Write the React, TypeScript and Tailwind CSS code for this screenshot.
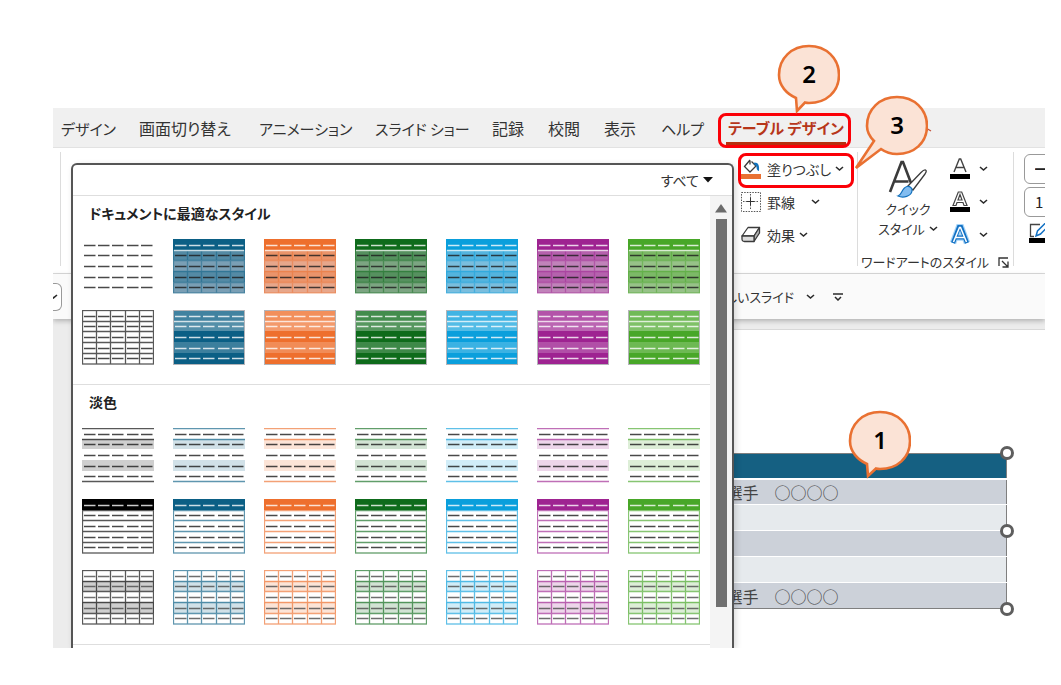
import { clsx } from 'clsx';
import type { ReactNode } from 'react';

type Variant = 'plain' | 'themed' | 'grid' | 'solid' | 'lines' | 'header' | 'banded';

const accents = [
    { name: '黒', color: '#000000' },
    { name: '青', color: '#0b5f85' },
    { name: 'オレンジ', color: '#ee6f2d' },
    { name: '濃い緑', color: '#0e6b1b' },
    { name: '水色', color: '#0a9fdc' },
    { name: '紫', color: '#9e2391' },
    { name: '緑', color: '#48a728' },
];

const sections: { title: string; rows: { first: Variant; rest: Variant }[] }[] = [
    {
        title: 'ドキュメントに最適なスタイル',
        rows: [
            { first: 'plain', rest: 'themed' },
            { first: 'grid', rest: 'solid' },
        ],
    },
    {
        title: '淡色',
        rows: [
            { first: 'lines', rest: 'lines' },
            { first: 'header', rest: 'header' },
            { first: 'banded', rest: 'banded' },
        ],
    },
];

const tabs = [
    { label: 'デザイン', width: 'w-[78px] text-[15px]' },
    { label: '画面切り替え', width: 'w-[120px]' },
    { label: 'アニメーション', width: 'w-[116px] text-[15px]' },
    { label: 'スライド ショー', width: 'w-[117px] text-[15px]' },
    { label: '記録', width: 'w-[56px]' },
    { label: '校閲', width: 'w-[56px]' },
    { label: '表示', width: 'w-[57px]' },
    { label: 'ヘルプ', width: 'w-[63px] text-[15px]' },
];

const tableRows = ['選手　○○○○', '', '', '', '選手　○○○○'];

const bands = [0, 11, 21, 32, 43, 54];
const dashRows = [6, 16, 27, 38, 48];
const dashCols = [2, 16, 30, 45, 59];
const columnLines = [14.5, 28.5, 43.5, 57.5];

function Band({ row, color, opacity = 1 }: { row: number; color: string; opacity?: number }) {
    return <rect x="0" y={bands[row]} width="72" height={bands[row + 1] - bands[row]} fill={color} opacity={opacity} />;
}

function StyleThumb({ variant, color }: { variant: Variant; color: string }) {
    const filledHeader = variant === 'themed' || variant === 'header';
    const hasColumns = variant === 'themed' || variant === 'grid' || variant === 'banded';
    const hasRows = hasColumns || variant === 'header';
    const lineOpacity = variant === 'themed' ? 0.45 : 0.65;

    return (
        <svg width="72" height="55" viewBox="0 0 72 55" aria-hidden="true">
            {variant === 'themed' && (
                <>
                    <rect width="72" height="54" fill="#e0dbe0" />
                    {[1, 2, 3, 4].map((row) => (
                        <Band key={row} row={row} color={color} opacity={row % 2 ? 0.66 : 0.48} />
                    ))}
                </>
            )}
            {variant === 'solid' && (
                <>
                    {[0.78, 0.7, 1, 0.8, 1].map((opacity, row) => (
                        <Band key={row} row={row} color={color} opacity={opacity} />
                    ))}
                    <rect x="0.5" y="0.5" width="71" height="54" fill="none" stroke="#b4b4b8" />
                </>
            )}
            {(variant === 'lines' || variant === 'banded') && (
                <>
                    <Band row={1} color={color} opacity={0.19} />
                    <Band row={3} color={color} opacity={0.19} />
                </>
            )}
            {hasRows && (
                <g stroke={color} strokeWidth="1.3" opacity={lineOpacity}>
                    <rect x="0.5" y="0.5" width="71" height="53.500" fill="none" />
                    {[11, 21, 32, 43].map((y) => (
                        <path key={y} d={`M0 ${y + 0.5}H72`} />
                    ))}
                    {hasColumns && columnLines.map((x) => <path key={x} d={`M${x} 0V54`} />)}
                </g>
            )}
            {variant === 'lines' && <path d="M0 .5H72M0 11.5H72M0 53.5H72" stroke={color} strokeWidth="1.3" opacity="0.65" />}
            {filledHeader && <Band row={0} color={color} />}
            {(variant === 'themed' || variant === 'solid') && <path d="M1 11.5H71" stroke="#fff" strokeWidth="1.400" opacity="0.75" />}
            {dashRows.map((y, row) => (
                <g
                    key={y}
                    stroke={variant === 'solid' || (filledHeader && row === 0) ? '#ffffff' : variant === 'banded' ? '#4a4a4a' : '#1c1c1c'}
                    strokeWidth="1.5"
                    opacity={0.8}
                >
                    {dashCols.map((x) => (
                        <path key={x} d={`M${x} ${y + 0.5}h11.500`} />
                    ))}
                </g>
            ))}
        </svg>
    );
}

function Chevron({ className }: { className?: string }) {
    return (
        <svg width="9" height="6" viewBox="0 0 9 6" fill="none" stroke="#2b2b2b" strokeWidth="1.6" className={clsx('shrink-0', className)}>
            <path d="M1 1l3.5 3L8 1" />
        </svg>
    );
}

function FillIcon() {
    return (
        <svg width="20" height="20" viewBox="0 0 20 20" fill="none">
            <path d="M9 1L3.500 7.500l5.500 5.500 6-6L10.500 2.500M9 1.500v4" stroke="#3b3b3b" strokeWidth="1.300" />
            <path d="M13.500 3.500c4 0 5 3 4.500 8.500-2-.5-2.500-2-2.500-4.500l-3-3z" fill="#1173bd" />
            <path d="M0 15h20v5H0z" fill="#e97132" />
        </svg>
    );
}

function BorderIcon() {
    return (
        <svg width="20" height="20" viewBox="0 0 20 20" fill="none" stroke="#555">
            <path d="M.5.5h19v19H.5z" strokeDasharray="1.500 1.200" />
            <path d="M9.500 2v16M2 9.500h16" strokeDasharray="1.500 1.200" />
            <path d="M6 9.500h7M9.500 6v7" stroke="#333" />
        </svg>
    );
}

function EffectIcon() {
    return (
        <svg width="20" height="18" viewBox="0 0 20 18" fill="none" stroke="#3b3b3b" strokeWidth="1.300" strokeLinejoin="round">
            <path d="M1 10l6-8.500h11.500L13 10z" fill="#fff" />
            <path d="M13 10l5.500-8.500V7L13 15.500z" fill="#b5b5b5" />
            <path d="M1 10h12v5.500H3.500Q1 15.500 1 13z" fill="#dcdcdc" />
        </svg>
    );
}

function QuickStyleIcon() {
    return (
        <svg width="40" height="40" viewBox="0 0 40 40" fill="none">
            <path d="M2 33L13.500 3h1.500l8 21M6.500 22.500h14" stroke="#3b3b3b" strokeWidth="2.600" />
            <path d="M20 27L33 13.500c4-4 7-3 4 1.500L25 31z" fill="#fff" stroke="#3b3b3b" strokeWidth="1.300" />
            <path d="M10 37c4-1 3.500-8 9-9.500 3-.5 5.500 1.500 5 4.500-.8 5-8.500 7.500-14 5z" fill="#83bdf0" stroke="#1371bd" strokeWidth="1.200" />
        </svg>
    );
}

function TextFillIcon() {
    return (
        <svg width="22" height="22" viewBox="0 0 22 22" fill="none">
            <path d="M5 14L10.300 1h1.400L17 14M7 9.500h8" stroke="#444" strokeWidth="1.400" />
            <path d="M1 16h20v5H1z" fill="#000" />
        </svg>
    );
}

function TextOutlineIcon() {
    return (
        <svg width="22" height="22" viewBox="0 0 22 22" fill="none">
            <path d="M4 14.500L9.300 1h3.400L18 14.500h-3l-1-3H8l-1 3zM9 9h4l-2-5.500z" stroke="#444" strokeWidth="1.200" />
            <path d="M1 16h20v5H1z" fill="#000" />
        </svg>
    );
}

function TextEffectIcon() {
    return (
        <svg width="22" height="22" viewBox="0 0 22 22" fill="none">
            <path d="M4 19L10 3h2l6 16M7 13.500h8" stroke="#a5d3f7" strokeWidth="6.500" />
            <path d="M4 19L10 3h2l6 16M7 13.500h8" stroke="#1271c4" strokeWidth="4.200" />
            <path d="M4.500 18L10.500 3.500h1l6 14.500M7 13.500h8" stroke="#fff" strokeWidth="1.500" />
        </svg>
    );
}

function PenOutlineIcon() {
    return (
        <svg width="22" height="20" viewBox="0 0 22 20" fill="none" className="shrink-0">
            <path d="M12 1.500H2.500v12H6" stroke="#444" strokeWidth="1.300" />
            <path d="M8 13l1.500-5L17 .5l3 3-7.500 7.500z" fill="#fff" stroke="#1271c4" strokeWidth="1.500" />
            <path d="M1 15h21v5H1z" fill="#000" />
        </svg>
    );
}

function RibbonButton({ icon, label, wide = false }: { icon: ReactNode; label: string; wide?: boolean }) {
    return (
        <button className="flex h-[33px] items-center text-left text-sm text-[#333]">
            <span className="w-[26px]">{icon}</span>
            {label}
            <Chevron className={wide ? 'ml-4' : 'ml-1'} />
        </button>
    );
}

function Callout({ label, className, path }: { label: string; className: string; path: string }) {
    return (
        <div className={clsx('absolute h-[76px] w-[76px]', className)}>
            <svg width="76" height="76" viewBox="0 0 76 76" className="absolute inset-0">
                <path d={path} fill="#fbe3d6" stroke="#e97132" strokeWidth="2.600" strokeLinejoin="miter" />
            </svg>
            <span className="absolute top-[2px] right-0 w-[62px] text-center font-['Noto_Sans'] text-2xl leading-[56px] font-semibold text-black">
                {label}
            </span>
        </div>
    );
}

function StyleGallery() {
    return (
        <div className="absolute top-[55px] bottom-0 left-[18px] flex w-[663px] flex-col overflow-hidden rounded-t-md border-2 border-b-0 border-[#555] bg-white shadow-[2px_2px_6px_rgba(0,0,0,0.15)]">
            <div className="flex h-[31px] shrink-0 items-center justify-end border-b border-[#dedede] pr-[19px]">
                <button className="flex items-center gap-1 text-sm text-[#333]">
                    すべて
                    <svg width="10" height="6" viewBox="0 0 10 6">
                        <path d="M0 0h10L5 5.500z" fill="#111" />
                    </svg>
                </button>
            </div>
            <div className="flex min-h-0 flex-1">
                <div className="flex-1 overflow-hidden">
                    {sections.map((section) => (
                        <section key={section.title} className="border-b border-[#dedede] pb-[19px]">
                            <h2 className="px-4 pt-[5px] text-sm leading-6 font-bold text-[#222]">{section.title}</h2>
                            <div className="grid gap-y-4 px-[9px] pt-[14px]">
                                {section.rows.map((row) => (
                                    <div key={row.rest} className="flex gap-[19px]">
                                        {accents.map((accent, i) => (
                                            <button key={accent.name} aria-label={`${section.title} ${accent.name}`} className="shrink-0">
                                                <StyleThumb variant={i === 0 ? row.first : row.rest} color={accent.color} />
                                            </button>
                                        ))}
                                    </div>
                                ))}
                            </div>
                        </section>
                    ))}
                </div>
                <div className="flex w-[22px] flex-col items-center bg-[#f4f4f4] pt-2 pb-[41px]">
                    <svg width="12" height="9" viewBox="0 0 12 9" className="shrink-0">
                        <path d="M6 0l6 8.500H0z" fill="#6b6b6b" />
                    </svg>
                    <div className="mt-[6px] w-[11px] flex-1 bg-[#707070]" />
                </div>
            </div>
        </div>
    );
}

function Ribbon() {
    return (
        <div className="flex h-[126px] border-b border-[#dcdcdc] bg-white pt-1 pb-[7px]">
            <div className="flex w-[688px] shrink-0 pl-[7px]">
                <div className="flex-1 border-l border-[#dcdcdc]" />
            </div>
            <div className="w-[117px] shrink-0 border-r border-[#dcdcdc]">
                <RibbonButton icon={<FillIcon />} label="塗りつぶし" />
                <RibbonButton icon={<BorderIcon />} label="罫線" wide />
                <RibbonButton icon={<EffectIcon />} label="効果" />
            </div>
            <div className="flex w-[156px] shrink-0 flex-col border-r border-[#dcdcdc]">
                <div className="flex pl-[18px]">
                    <button className="flex w-[64px] flex-col items-center pt-[7px] text-[13px] leading-5 text-[#333]">
                        <QuickStyleIcon />
                        <span>クイック</span>
                        <span className="flex items-center gap-1 whitespace-nowrap">
                            スタイル
                            <Chevron />
                        </span>
                    </button>
                    <div className="pl-[9px]">
                        {[
                            { label: '文字の塗りつぶし', icon: <TextFillIcon /> },
                            { label: '文字の輪郭', icon: <TextOutlineIcon /> },
                            { label: '文字の効果', icon: <TextEffectIcon /> },
                        ].map((item) => (
                            <button key={item.label} aria-label={item.label} className="flex h-[33px] items-center gap-2">
                                {item.icon}
                                <Chevron />
                            </button>
                        ))}
                    </div>
                </div>
                <div className="flex items-center justify-between pr-1 pl-[3px] text-[13px] leading-[22px] whitespace-nowrap text-[#333]">
                    ワードアートのスタイル
                    <button aria-label="ワードアートのスタイルの書式設定">
                        <svg width="11" height="11" viewBox="0 0 11 11" fill="none" stroke="#333" strokeWidth="1.300">
                            <path d="M1 9V1h9M4 4l5.500 5.500M10 4.500V10H4.500" />
                        </svg>
                    </button>
                </div>
            </div>
            <div className="flex min-w-0 flex-1 flex-col gap-[3px] overflow-hidden pt-[2px] pl-[10px] text-[15px] text-[#222]">
                <select aria-label="ペンのスタイル" className="h-[30px] w-[100px] shrink-0 appearance-none rounded-md border border-[#999] bg-white pl-[10px] font-bold">
                    <option>━━━</option>
                </select>
                <select aria-label="ペンの太さ" className="h-[30px] w-[100px] shrink-0 appearance-none rounded-md border border-[#999] bg-white pl-[10px]">
                    <option>1 pt</option>
                </select>
                <button aria-label="ペンの色" className="mt-[3px] pl-1">
                    <PenOutlineIcon />
                </button>
            </div>
        </div>
    );
}

export default function App() {
    return (
        <div className="flex min-h-screen flex-col bg-white pt-[108px] pr-4 pb-[37px] pl-[53px] font-['Noto_Sans_CJK_JP',sans-serif] [font-feature-settings:'palt']">
            <div className="relative flex flex-1 flex-col">
                <div className="relative flex flex-1 flex-col overflow-hidden bg-[#ececec]">
                    <nav className="flex h-10 items-center border-b border-[#e2e2e2] bg-[#f0f0f0] pl-2 text-base whitespace-nowrap text-[#333]">
                        <div className="flex shrink-0 items-baseline pt-[2px]">
                            {tabs.map((tab) => (
                                <button key={tab.label} className={clsx('shrink-0 text-left', tab.width)}>
                                    {tab.label}
                                </button>
                            ))}
                        </div>
                        <button className="mt-1 ml-[2px] w-[120px] shrink-0 border-b-[3px] border-[#b7300f] text-center text-[15px] leading-7 font-bold text-[#b7361a]">
                            テーブル デザイン
                        </button>
                        <button aria-label="レイアウト" className="ml-5 flex w-[66px] shrink-0 justify-end pt-1">
                            <svg width="6" height="6" viewBox="0 0 6 6" fill="none" stroke="#c4533c" strokeWidth="1.200">
                                <path d="M0 1l5 3" />
                            </svg>
                        </button>
                    </nav>
                    <Ribbon />
                    <div className="flex h-[45px] items-center bg-[#fafafa] text-[13px] text-[#333] shadow-[0_2px_5px_rgba(0,0,0,0.25)]">
                        <button aria-label="フォント サイズ" className="flex h-7 w-[9px] items-center rounded-r-md border border-l-0 border-[#999] bg-white">
                            <Chevron className="-ml-1" />
                        </button>
                        <button className="ml-[640px] flex w-[113px] shrink-0 items-center justify-end gap-3 whitespace-nowrap">
                            新しいスライド
                            <Chevron />
                        </button>
                        <button aria-label="クイック アクセス ツール バーのユーザー設定" className="ml-[18px]">
                            <svg width="10" height="8" viewBox="0 0 10 8" fill="none" stroke="#2b2b2b" strokeWidth="1.500">
                                <path d="M0 1h10M2 4l3 3 3-3" />
                            </svg>
                        </button>
                    </div>
                    <div className="flex flex-1 pt-[10px] pl-10">
                        <main className="flex-1 border-t border-[#d8d8d8] bg-white pt-[123px] pr-[38px] pl-[107px]">
                            <div className="relative">
                                <table className="w-full border-collapse border border-[#7f7f7f] text-base leading-6 text-[#444]">
                                    <thead>
                                        <tr className="h-[25px] border-b-2 border-white bg-[#156082]">
                                            <th className="w-[526px]" />
                                            <th />
                                        </tr>
                                    </thead>
                                    <tbody>
                                        {tableRows.map((text, i) => (
                                            <tr key={i} className={clsx('h-[26px]', i < 4 && 'border-b border-white', i % 2 ? 'bg-[#e6eaed]' : 'bg-[#ccd1d9]')}>
                                                <td />
                                                <td className="p-0 whitespace-nowrap">{text}</td>
                                            </tr>
                                        ))}
                                    </tbody>
                                </table>
                                <div className="absolute -top-[7px] -right-[7px] -bottom-[7px] flex flex-col justify-between">
                                    {['top', 'middle', 'bottom'].map((handle) => (
                                        <span key={handle} className="size-[14px] rounded-full border-[3px] border-[#5e5e5e] bg-white" />
                                    ))}
                                </div>
                            </div>
                        </main>
                    </div>
                    <StyleGallery />
                </div>

                <div className="absolute top-[5px] left-[665px] h-[35px] w-[133px] rounded-lg border-[3px] border-[#fb0007]" />
                <div className="absolute top-[45px] left-[685px] h-[35px] w-[116px] rounded-lg border-[3px] border-[#fb0007]" />
                <Callout
                    label="2"
                    className="-top-[64px] left-[711px]"
                    path="M32 54C23 50 15 42 15 31C15 14 28 2 45 2S75 14 75 31S62 59 45 59Q43 59 41 58.500L33 67z"
                />
                <Callout
                    label="3"
                    className="-top-[13px] left-[799px]"
                    path="M22 46C17 41 15 37 15 31C15 14 28 2 45 2S75 14 75 31S62 59 45 59Q36 59 29 54L4 73z"
                />
                <Callout
                    label="1"
                    className="top-[302px] left-[782px]"
                    path="M32 54C23 50 15 42 15 31C15 14 28 2 45 2S75 14 75 31S62 59 45 59Q43 59 41 58.500L33 66z"
                />
            </div>
        </div>
    );
}
